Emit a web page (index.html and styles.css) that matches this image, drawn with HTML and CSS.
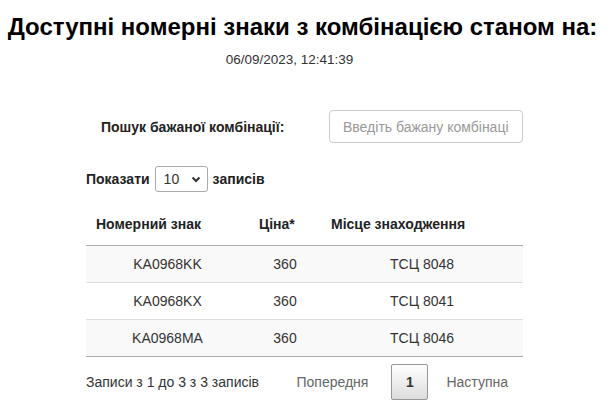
FILE: index.html
```html
<!DOCTYPE html>
<html lang="uk">
<head>
  <meta charset="UTF-8">
  <meta name="viewport" content="width=device-width, initial-scale=1">
  <title>Доступні номерні знаки</title>
  <link rel="stylesheet" href="styles.css">
</head>
<body>

  <h1 class="title">Доступні номерні знаки з комбінацією станом на:</h1>
  <div class="stamp">06/09/2023, 12:41:39</div>

  <div class="wrap">
    <div class="search">
      <label for="q">Пошук бажаної комбінації:</label>
      <input id="q" type="text" placeholder="Введіть бажану комбінацію">
    </div>

    <div class="length">
      Показати
      <span class="select">
        <select>
          <option>10</option>
          <option>25</option>
          <option>50</option>
        </select>
        <svg width="10" height="7" viewBox="0 0 10 7"><path d="M1.5 1.5 L5 5 L8.5 1.5" fill="none" stroke="#333" stroke-width="2"/></svg>
      </span>
      записів
    </div>

    <table class="plates">
      <thead>
        <tr>
          <th class="c1">Номерний знак</th>
          <th class="c2">Ціна*</th>
          <th>Місце знаходження</th>
        </tr>
      </thead>
      <tbody>
        <tr><td>KA0968KK</td><td>360</td><td>ТСЦ 8048</td></tr>
        <tr><td>KA0968KX</td><td>360</td><td>ТСЦ 8041</td></tr>
        <tr><td>KA0968MA</td><td>360</td><td>ТСЦ 8046</td></tr>
      </tbody>
    </table>

    <div class="bottom">
      <div class="info">Записи з 1 до 3 з 3 записів</div>
      <div class="pager">
        <span class="prev">Попередня</span>
        <span class="current">1</span>
        <span class="next">Наступна</span>
      </div>
    </div>
  </div>

</body>
</html>
```

FILE: styles.css
```css
body {
  font-family: 'Liberation Sans', Arial, sans-serif;
  margin: 0;
  color: #333;
  background: #fff;
  font-size: 14px;
}
.title {
  margin: 0;
  padding: 13px 11px 0 0;
  font-size: 24px;
  line-height: 28px;
  text-align: center;
  color: #000;
}
.stamp {
  margin-top: 11px;
  padding-right: 37px;
  line-height: 16px;
  font-size: 13.5px;
  text-align: center;
  color: #333;
}
.wrap {
  width: 437px;
  margin: 0 0 0 86px;
}
.search {
  display: flex;
  align-items: center;
  margin-top: 42px;
  padding-left: 15px;
}
.search label {
  font-weight: bold;
  color: #222;
}
.search input {
  margin-left: auto;
  width: 194px;
  height: 33px;
  box-sizing: border-box;
  border: 1px solid #ccc;
  border-radius: 4px;
  padding: 0 13px;
  font-family: inherit;
  font-size: 14px;
  color: #333;
}
.search input::placeholder {
  color: #999;
}
.length {
  display: flex;
  align-items: center;
  gap: 5px;
  margin-top: 23px;
  font-weight: bold;
  color: #222;
}
.select {
  position: relative;
  display: inline-block;
}
.select select {
  appearance: none;
  -webkit-appearance: none;
  width: 53px;
  height: 26px;
  border: 1px solid #aaa;
  border-radius: 3px;
  background: #fff;
  padding: 0 0 0 8px;
  font-family: inherit;
  font-size: 14px;
  color: #333;
}
.select svg {
  position: absolute;
  right: 7px;
  top: 10px;
  pointer-events: none;
}
.plates {
  width: 100%;
  margin-top: 11px;
  border-collapse: collapse;
  border-bottom: 1px solid #aaa;
}
.plates th {
  padding: 13px 18px 13px 10px;
  line-height: 16px;
  text-align: left;
  font-weight: bold;
  color: #222;
  border-bottom: 1px solid #aaa;
}
.plates th.c1 {
  width: 135px;
}
.plates th.c2 {
  width: 44px;
}
.plates td {
  padding: 10px;
  line-height: 16px;
  text-align: center;
  border-top: 1px solid #ddd;
}
.plates tbody tr:first-child td {
  border-top: none;
}
.plates tbody tr:nth-child(odd) {
  background: #f9f9f9;
}
.bottom {
  display: flex;
  align-items: center;
  margin-top: 7px;
}
.pager {
  display: flex;
  align-items: center;
  margin-left: auto;
  padding-right: 15px;
  color: #666;
}
.current {
  margin: 0 18px 0 23px;
  width: 37px;
  height: 36px;
  box-sizing: border-box;
  display: flex;
  align-items: center;
  justify-content: center;
  border: 1px solid #979797;
  border-radius: 2px;
  background: linear-gradient(to bottom, #fff 0%, #dcdcdc 100%);
  color: #333;
  font-weight: bold;
}
```
